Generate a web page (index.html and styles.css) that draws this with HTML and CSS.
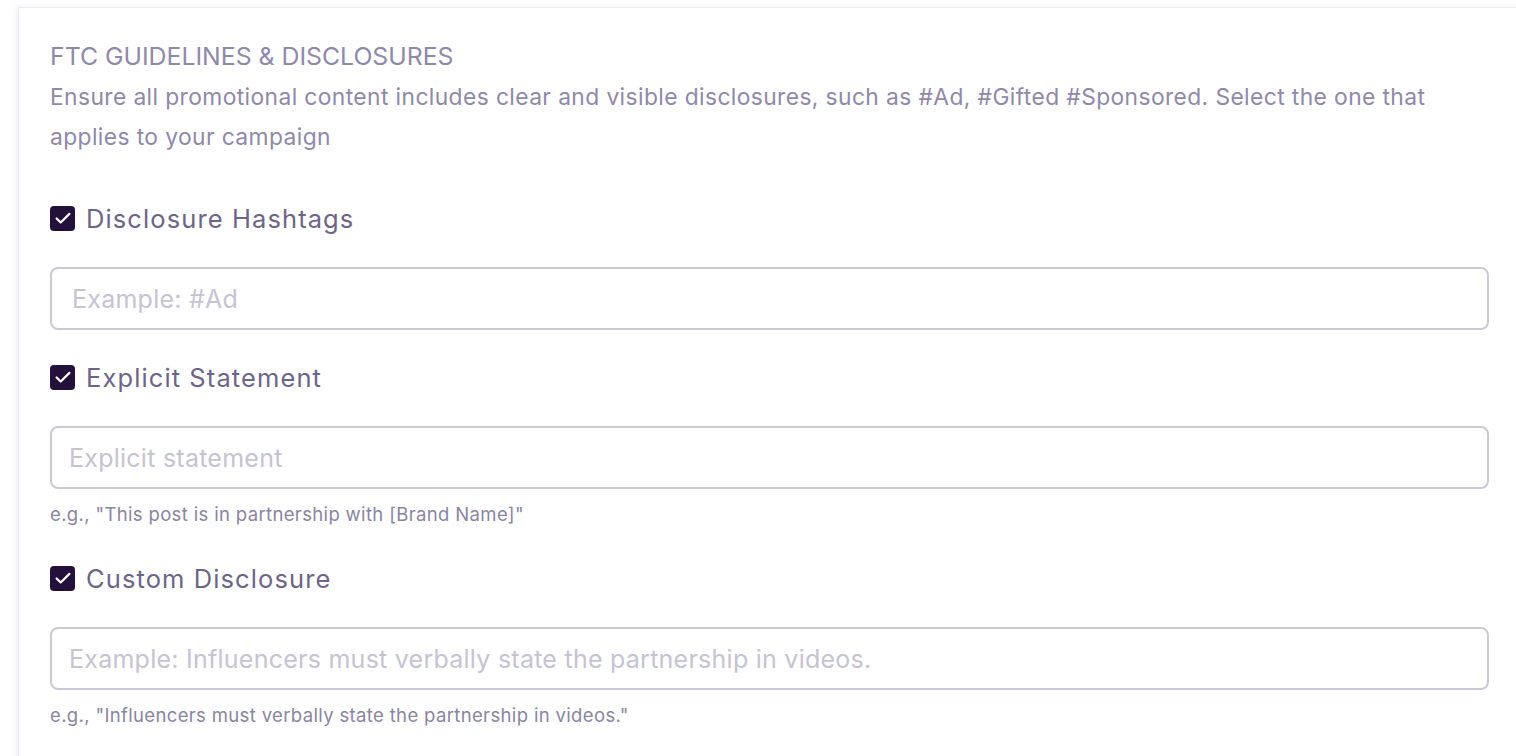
FILE: index.html
```html
<!DOCTYPE html>
<html lang="en">
<head>
<meta charset="utf-8">
<title>FTC Guidelines</title>
<link rel="stylesheet" href="styles.css">
</head>
<body>
<div class="page">
  <section class="card">
    <h2 class="title">FTC GUIDELINES &amp; DISCLOSURES</h2>
    <p class="desc">Ensure all promotional content includes clear and visible disclosures, such as #Ad, #Gifted #Sponsored. Select the one that applies to your campaign</p>

    <div class="field">
      <label class="check-row">
        <span class="box"><svg viewBox="0 0 24 24" width="22" height="22"><path d="M5 12.5l4.5 4.5L19 7.5" fill="none" stroke="#fff" stroke-width="2.4" stroke-linecap="round" stroke-linejoin="round"/></svg></span>
        <span class="label">Disclosure Hashtags</span>
      </label>
      <div class="input ph1">Example: #Ad</div>
    </div>

    <div class="field">
      <label class="check-row">
        <span class="box"><svg viewBox="0 0 24 24" width="22" height="22"><path d="M5 12.5l4.5 4.5L19 7.5" fill="none" stroke="#fff" stroke-width="2.4" stroke-linecap="round" stroke-linejoin="round"/></svg></span>
        <span class="label">Explicit Statement</span>
      </label>
      <div class="input">Explicit statement</div>
      <div class="hint">e.g., "This post is in partnership with [Brand Name]"</div>
    </div>

    <div class="field">
      <label class="check-row">
        <span class="box"><svg viewBox="0 0 24 24" width="22" height="22"><path d="M5 12.5l4.5 4.5L19 7.5" fill="none" stroke="#fff" stroke-width="2.4" stroke-linecap="round" stroke-linejoin="round"/></svg></span>
        <span class="label">Custom Disclosure</span>
      </label>
      <div class="input">Example: Influencers must verbally state the partnership in videos.</div>
      <div class="hint">e.g., "Influencers must verbally state the partnership in videos."</div>
    </div>
  </section>
</div>
</body>
</html>
```

FILE: styles.css
```css
* { box-sizing: border-box; }
html, body { margin: 0; padding: 0; background: #ffffff; overflow: hidden; }
body { font-family: "Inter", "Noto Sans", sans-serif; }
.page { padding: 7px 0 0 18px; width: 1540px; height: 756px; }
.card {
  background: #fff;
  border: 1px solid #ecebf1;
  border-right: none;
  border-bottom: none;
  box-shadow: -2px 0 6px rgba(60, 50, 100, 0.08);
  padding: 33px 0 40px 31px;
  width: 1530px;
  height: 800px;
}
.title {
  margin: 0;
  font-weight: 400;
  font-size: 24.8px;
  line-height: 30px;
  color: #8f89a9;
}
.desc {
  margin: 6px 0 0;
  width: 1400px;
  font-size: 22.8px;
  letter-spacing: 0.4px;
  line-height: 40px;
  color: #8f89a9;
}
.field { margin-top: 41px; width: 1439px; }
.field + .field { margin-top: 27px; }
.check-row { display: flex; align-items: center; gap: 11px; height: 40px; }
.box {
  width: 25px; height: 25px;
  border-radius: 4px;
  background: #23113b;
  display: flex; align-items: center; justify-content: center;
}
.label { font-size: 25.5px; letter-spacing: 1.1px; color: #6d6588; }
.input {
  margin-top: 29px;
  height: 63px;
  border: 2px solid #cbc8d8;
  border-radius: 8px;
  padding: 0 17px;
  display: flex; align-items: center;
  font-size: 25px;
  letter-spacing: 0.25px;
  color: #c6c3d3;
}
.input.ph1 { padding-left: 20px; }
.hint {
  margin-top: 13px;
  padding-bottom: 5px;
  font-size: 18.5px;
  letter-spacing: 0.35px;
  line-height: 24px;
  color: #8a85a1;
}
```
